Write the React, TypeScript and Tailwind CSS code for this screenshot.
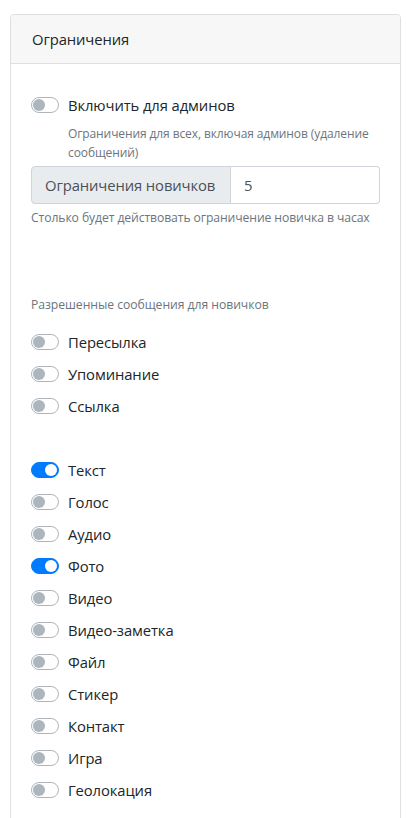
import React from 'react';

type Item = { label: string; on?: boolean };

const groupA: Item[] = [
    { label: 'Пересылка' },
    { label: 'Упоминание' },
    { label: 'Ссылка' },
];

const groupB: Item[] = [
    { label: 'Текст', on: true },
    { label: 'Голос' },
    { label: 'Аудио' },
    { label: 'Фото', on: true },
    { label: 'Видео' },
    { label: 'Видео-заметка' },
    { label: 'Файл' },
    { label: 'Стикер' },
    { label: 'Контакт' },
    { label: 'Игра' },
    { label: 'Геолокация' },
];

const Switch: React.FC<{ on?: boolean }> = ({ on }) => (
    <span
        className={`relative inline-block w-[28px] h-[16px] rounded-full border shrink-0 ${
            on ? 'bg-[#007bff] border-[#007bff]' : 'bg-white border-[#adb5bd]'
        }`}
    >
        <span
            className={`absolute top-[1px] w-[12px] h-[12px] rounded-full ${
                on ? 'left-[13px] bg-white' : 'left-[1px] bg-[#adb5bd]'
            }`}
        />
    </span>
);

const SwitchRow: React.FC<{ item: Item }> = ({ item }) => (
    <div className="flex items-center h-[24px]">
        <Switch on={item.on} />
        <span className="ml-[9px] text-[#212529]">{item.label}</span>
    </div>
);

export default function App() {
    return (
        <div className="bg-white min-h-[818px] pt-[14px] pl-[10px] pr-[6px] text-[14.8px] leading-[24px] tracking-[-0.1px]" style={{ fontFamily: '"Open Sans", "Liberation Sans", sans-serif' }}>
            <div className="border border-[#dfdfdf] rounded-[4px] min-h-[820px]">
                <div className="bg-[#f7f7f7] border-b border-[#dfdfdf] px-[21px] py-[12px] text-[#212529] rounded-t-[4px]">
                    Ограничения
                </div>
                <div className="px-[20px] pt-[29px] pb-[20px]">
                    <div className="flex items-center h-[24px]">
                        <Switch />
                        <span className="ml-[9px] text-[#212529]">Включить для админов</span>
                    </div>
                    <div className="pl-[37px] pt-[7px] text-[12px] leading-[19px] text-[#6c757d] tracking-[-0.1px]">
                        Ограничения для всех, включая админов (удаление сообщений)
                    </div>
                    <div className="flex mt-[4px] h-[38px]">
                        <div className="w-[200px] flex items-center px-[13px] bg-[#e9ecef] border border-[#ced4da] rounded-l-[4px] text-[#495057] whitespace-nowrap">
                            Ограничения новичков
                        </div>
                        <div className="flex-1 flex items-center px-[13px] border border-l-0 border-[#ced4da] rounded-r-[4px] text-[#495057]">
                            5
                        </div>
                    </div>
                    <div className="mt-[4px] text-[12.2px] leading-[19px] text-[#6c757d] tracking-[-0.1px] whitespace-nowrap">
                        Столько будет действовать ограничение новичка в часах
                    </div>

                    <div className="mt-[68px] text-[12.2px] leading-[19px] text-[#6c757d] tracking-[-0.05px]">
                        Разрешенные сообщения для новичков
                    </div>
                    <div className="mt-[16px] flex flex-col gap-[8px]">
                        {groupA.map(i => <SwitchRow key={i.label} item={i} />)}
                    </div>
                    <div className="mt-[40px] flex flex-col gap-[8px]">
                        {groupB.map(i => <SwitchRow key={i.label} item={i} />)}
                    </div>
                </div>
            </div>
        </div>
    );
}
